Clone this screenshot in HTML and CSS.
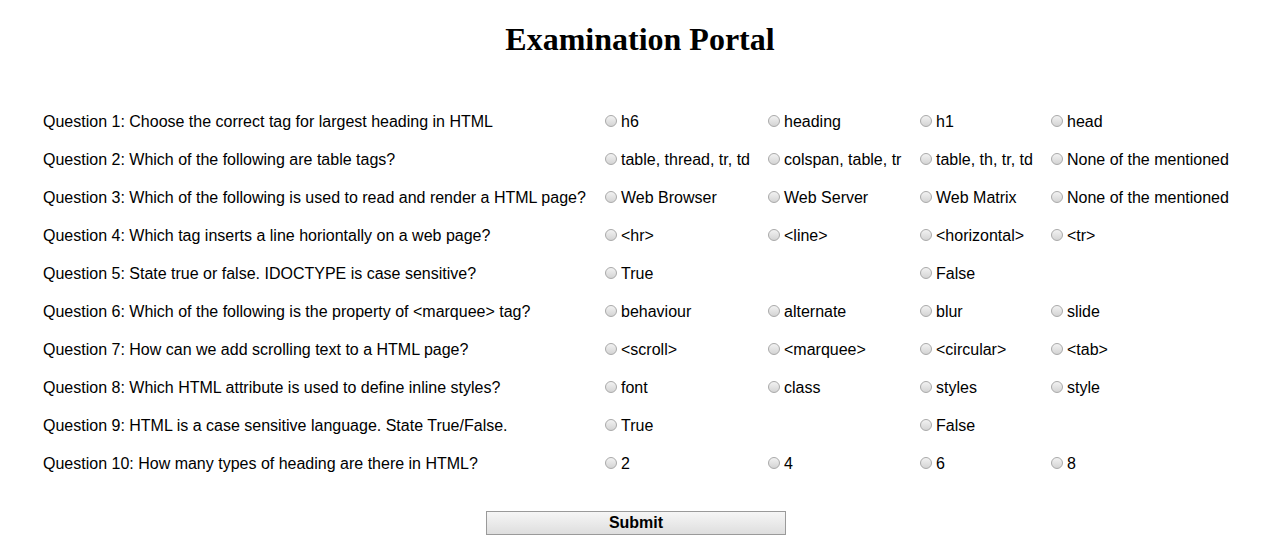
FILE: index.html
```html
<!DOCTYPE html>
<html>
<head>
<meta charset="utf-8">
<title>Examination Portal</title>
<link rel="stylesheet" href="styles.css">
</head>
<body>
<h1 class="title">Examination Portal</h1>
<form class="exam">
  <div class="row"><span class="q">Question 1: Choose the correct tag for largest heading in HTML</span>
    <label class="opt"><input type="radio" name="q1"><span>h6</span></label>
    <label class="opt"><input type="radio" name="q1"><span>heading</span></label>
    <label class="opt"><input type="radio" name="q1"><span>h1</span></label>
    <label class="opt"><input type="radio" name="q1"><span>head</span></label></div>
  <div class="row"><span class="q">Question 2: Which of the following are table tags?</span>
    <label class="opt"><input type="radio" name="q2"><span>table, thread, tr, td</span></label>
    <label class="opt"><input type="radio" name="q2"><span>colspan, table, tr</span></label>
    <label class="opt"><input type="radio" name="q2"><span>table, th, tr, td</span></label>
    <label class="opt"><input type="radio" name="q2"><span>None of the mentioned</span></label></div>
  <div class="row"><span class="q">Question 3: Which of the following is used to read and render a HTML page?</span>
    <label class="opt"><input type="radio" name="q3"><span>Web Browser</span></label>
    <label class="opt"><input type="radio" name="q3"><span>Web Server</span></label>
    <label class="opt"><input type="radio" name="q3"><span>Web Matrix</span></label>
    <label class="opt"><input type="radio" name="q3"><span>None of the mentioned</span></label></div>
  <div class="row"><span class="q">Question 4: Which tag inserts a line horiontally on a web page?</span>
    <label class="opt"><input type="radio" name="q4"><span>&lt;hr&gt;</span></label>
    <label class="opt"><input type="radio" name="q4"><span>&lt;line&gt;</span></label>
    <label class="opt"><input type="radio" name="q4"><span>&lt;horizontal&gt;</span></label>
    <label class="opt"><input type="radio" name="q4"><span>&lt;tr&gt;</span></label></div>
  <div class="row"><span class="q">Question 5: State true or false. IDOCTYPE is case sensitive?</span>
    <label class="opt"><input type="radio" name="q5"><span>True</span></label>
    <span class="opt"></span>
    <label class="opt"><input type="radio" name="q5"><span>False</span></label>
    <span class="opt"></span></div>
  <div class="row"><span class="q">Question 6: Which of the following is the property of &lt;marquee&gt; tag?</span>
    <label class="opt"><input type="radio" name="q6"><span>behaviour</span></label>
    <label class="opt"><input type="radio" name="q6"><span>alternate</span></label>
    <label class="opt"><input type="radio" name="q6"><span>blur</span></label>
    <label class="opt"><input type="radio" name="q6"><span>slide</span></label></div>
  <div class="row"><span class="q">Question 7: How can we add scrolling text to a HTML page?</span>
    <label class="opt"><input type="radio" name="q7"><span>&lt;scroll&gt;</span></label>
    <label class="opt"><input type="radio" name="q7"><span>&lt;marquee&gt;</span></label>
    <label class="opt"><input type="radio" name="q7"><span>&lt;circular&gt;</span></label>
    <label class="opt"><input type="radio" name="q7"><span>&lt;tab&gt;</span></label></div>
  <div class="row"><span class="q">Question 8: Which HTML attribute is used to define inline styles?</span>
    <label class="opt"><input type="radio" name="q8"><span>font</span></label>
    <label class="opt"><input type="radio" name="q8"><span>class</span></label>
    <label class="opt"><input type="radio" name="q8"><span>styles</span></label>
    <label class="opt"><input type="radio" name="q8"><span>style</span></label></div>
  <div class="row"><span class="q">Question 9: HTML is a case sensitive language. State True/False.</span>
    <label class="opt"><input type="radio" name="q9"><span>True</span></label>
    <span class="opt"></span>
    <label class="opt"><input type="radio" name="q9"><span>False</span></label>
    <span class="opt"></span></div>
  <div class="row"><span class="q">Question 10: How many types of heading are there in HTML?</span>
    <label class="opt"><input type="radio" name="q10"><span>2</span></label>
    <label class="opt"><input type="radio" name="q10"><span>4</span></label>
    <label class="opt"><input type="radio" name="q10"><span>6</span></label>
    <label class="opt"><input type="radio" name="q10"><span>8</span></label></div>
  <div class="actions"><button type="button" class="submit">Submit</button></div>
</form>
</body>
</html>
```
FILE: styles.css
```css
html, body {
  margin: 0;
  padding: 0;
  background: #ffffff;
  color: #000000;
}

.title {
  font-family: "Liberation Serif", "Times New Roman", serif;
  font-size: 32px;
  font-weight: bold;
  line-height: 37px;
  text-align: center;
  margin: 21px 0 0 0;
  padding-left: 19px;
}

.exam {
  font-family: "Liberation Sans", Arial, sans-serif;
  font-size: 16px;
  padding: 45px 0 0 43px;
}

.row {
  display: grid;
  grid-template-columns: 562px 163px 152px 131px auto;
  height: 38px;
  align-items: center;
  line-height: 18px;
}

.q {
  white-space: nowrap;
}

.opt {
  display: flex;
  align-items: center;
  white-space: nowrap;
}

.opt input {
  -webkit-appearance: none;
  appearance: none;
  width: 12px;
  height: 12px;
  margin: 0 4px 0 0;
  border-radius: 50%;
  border: 1px solid #a9a9a9;
  background: linear-gradient(#f2f2f2, #d4d4d4);
  box-sizing: border-box;
  position: relative;
  top: -1px;
}

.actions {
  display: flex;
  justify-content: flex-start;
  padding: 28px 0 0 443px;
}

.submit {
  width: 300px;
  height: 24px;
  font-family: "Liberation Sans", Arial, sans-serif;
  font-size: 16px;
  font-weight: bold;
  color: #000;
  border: 1px solid #9a9a9a;
  border-radius: 0;
  background: linear-gradient(#f6f6f6, #dedede);
  padding: 0;
  margin: 0;
}
```
